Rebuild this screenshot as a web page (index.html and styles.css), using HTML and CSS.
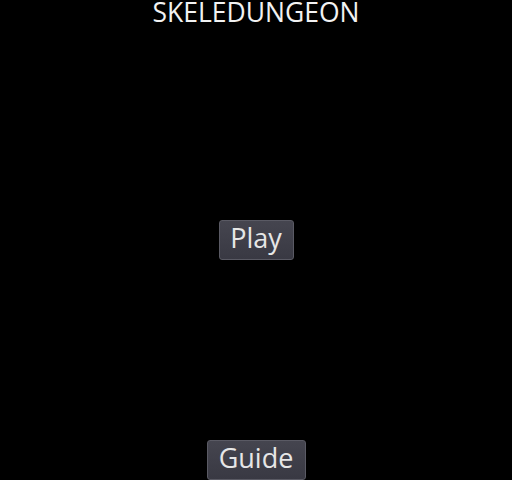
FILE: index.html
```html
<!DOCTYPE html>
<html>
<head>
<meta charset="utf-8">
<link rel="stylesheet" href="styles.css">
</head>
<body>
<div class="screen">
  <h1 class="title">SKELEDUNGEON</h1>
  <div class="middle">
    <button class="btn btn-play">Play</button>
  </div>
  <button class="btn btn-guide">Guide</button>
</div>
</body>
</html>
```
FILE: styles.css
```css
html, body {
  margin: 0;
  padding: 0;
  background: #000;
}
.screen {
  width: 512px;
  height: 480px;
  display: flex;
  flex-direction: column;
  align-items: center;
  overflow: hidden;
  font-family: "Open Sans", "DejaVu Sans", sans-serif;
}
.title {
  margin: 0;
  font-weight: normal;
  font-size: 26.5px;
  line-height: 25px;
  color: #f2f2f2;
}
.middle {
  flex: 1;
  display: flex;
  align-items: center;
  justify-content: center;
  padding-top: 14px;
}
.btn {
  font-family: "Open Sans", "DejaVu Sans", sans-serif;
  font-size: 27px;
  color: #e6e6e6;
  background: linear-gradient(#45454f, #393943);
  border: 1px solid #5a5a64;
  border-radius: 3px;
  padding: 0 0 4px 0;
  height: 40px;
  line-height: 34px;
}
.btn-play {
  width: 75px;
}
.btn-guide {
  width: 99px;
}
```
